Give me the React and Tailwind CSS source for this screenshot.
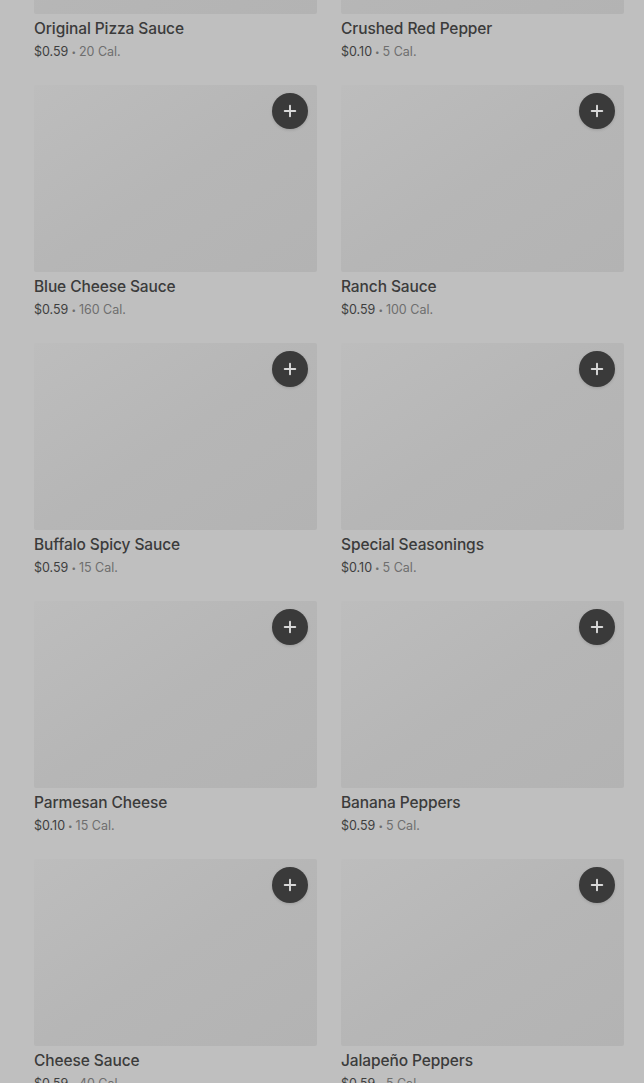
import { Plus } from "lucide-react";

const items = [
  { name: "Original Pizza Sauce", price: "$0.59", cal: "20 Cal." },
  { name: "Crushed Red Pepper", price: "$0.10", cal: "5 Cal." },
  { name: "Blue Cheese Sauce", price: "$0.59", cal: "160 Cal." },
  { name: "Ranch Sauce", price: "$0.59", cal: "100 Cal." },
  { name: "Buffalo Spicy Sauce", price: "$0.59", cal: "15 Cal." },
  { name: "Special Seasonings", price: "$0.10", cal: "5 Cal." },
  { name: "Parmesan Cheese", price: "$0.10", cal: "15 Cal." },
  { name: "Banana Peppers", price: "$0.59", cal: "5 Cal." },
  { name: "Cheese Sauce", price: "$0.59", cal: "40 Cal." },
  { name: "Jalapeño Peppers", price: "$0.59", cal: "5 Cal." },
];

function Card({ item }) {
  return (
    <div className="flex flex-col">
      <div className="relative h-[187px] rounded-[2px] bg-gradient-to-br from-[#bdbdbd] via-[#b6b6b6] to-[#b3b3b3]">
        <button className="absolute right-[9px] top-[8px] flex h-9 w-9 items-center justify-center rounded-full bg-[#3a3a3a] shadow-[0_1px_3px_rgba(0,0,0,0.15)]">
          <Plus size={18} strokeWidth={2.6} className="text-[#d8d8d8]" />
        </button>
      </div>
      <div className="mt-[3px] text-[15.5px] font-medium leading-6 tracking-[-0.1px] text-[#3b3b3b]">
        {item.name}
      </div>
      <div className="mt-[2px] flex items-center text-[12.5px] leading-[18px]">
        <span className="text-[#3e3e3e]">{item.price}</span>
        <span className="mx-[3px] text-[8px] text-[#6e6e6e]">•</span>
        <span className="text-[#6e6e6e]">{item.cal}</span>
      </div>
    </div>
  );
}

export default function App() {
  return (
    <div
      className="h-[1083px] overflow-hidden bg-[#bfbfbf]"
      style={{ fontFamily: "Inter, 'Liberation Sans', sans-serif" }}
    >
      <div className="-mt-[173px] grid grid-cols-2 gap-x-6 gap-y-[24px] pl-[34px] pr-[20px]">
        {items.map((item, i) => (
          <Card key={i} item={item} />
        ))}
      </div>
    </div>
  );
}
